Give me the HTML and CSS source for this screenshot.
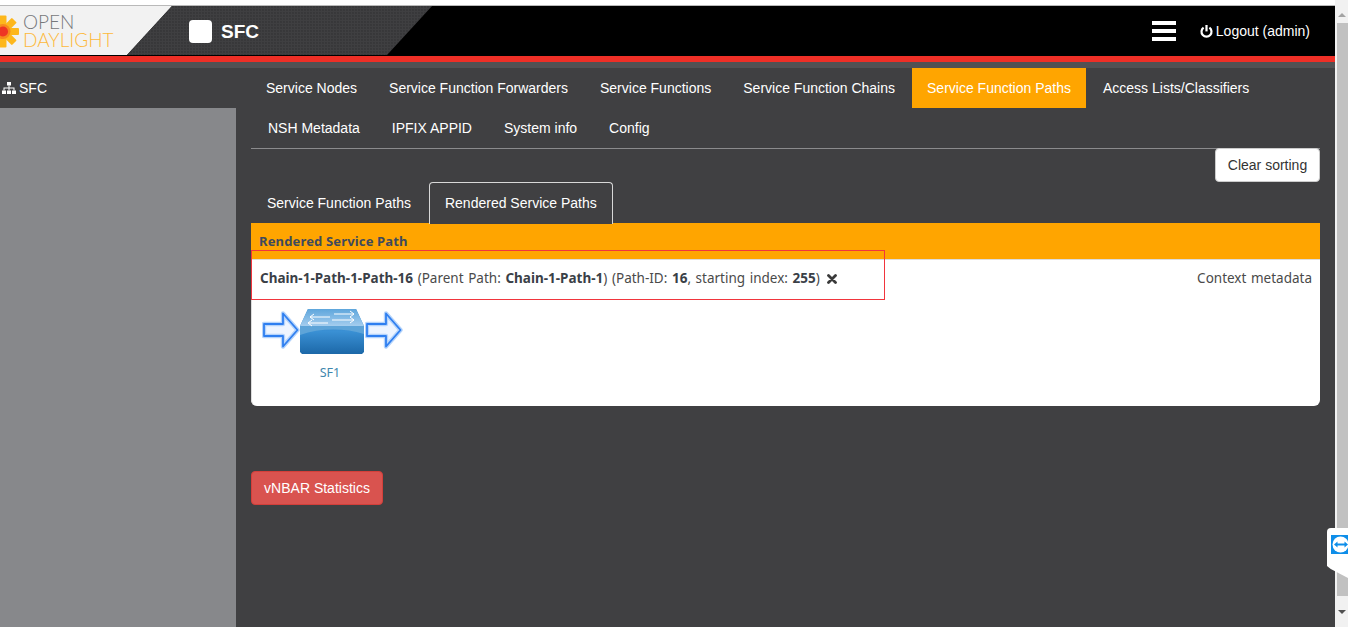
FILE: index.html
```html
<!DOCTYPE html>
<html lang="en">
<head>
<meta charset="utf-8">
<title>SFC</title>
<link rel="stylesheet" href="styles.css">
</head>
<body>
<div class="page">
  <div class="topstrip"></div>
  <header class="header">
    <div class="logo">
      <svg class="flower" width="20" height="34" viewBox="0 0 20 34">
        <g fill="#fdb71c">
          <rect x="-13" y="13" width="32" height="7" rx="1"/>
          <rect x="-13" y="13" width="32" height="7" rx="1" transform="rotate(45 3 16.500)"/>
          <rect x="-13" y="13" width="32" height="7" rx="1" transform="rotate(90 3 16.500)"/>
          <rect x="-13" y="13" width="32" height="7" rx="1" transform="rotate(135 3 16.500)"/>
        </g>
        <circle cx="3" cy="16.500" r="7.500" fill="#f78a1e"/>
        <circle cx="3" cy="16.500" r="5" fill="#ee3524"/>
      </svg>
      <div class="logotext"><span class="open">OPEN</span><span class="day">DAYLIGHT</span></div>
    </div>
    <div class="brand">
      <span class="brandbox"></span>
      <span class="brandname">SFC</span>
    </div>
    <div class="headright">
      <div class="burger"><i></i><i></i><i></i></div>
      <div class="logout">
        <svg width="13" height="13" viewBox="0 0 13 13"><path d="M3.600 2.600a5 5 0 1 0 5.800 0" fill="none" stroke="#fff" stroke-width="2.200"/><rect x="5.400" y="0" width="2.200" height="6.400" fill="#fff"/></svg>
        <span>Logout (admin)</span>
      </div>
    </div>
  </header>
  <div class="redbar"></div>
  <div class="graybar"></div>
  <div class="main">
    <aside class="side">
      <div class="sidehead">
        <svg width="14" height="12" viewBox="0 0 14 12" fill="#fff"><rect x="5" y="0" width="4" height="3.500"/><rect x="0" y="8.500" width="4" height="3.500"/><rect x="5" y="8.500" width="4" height="3.500"/><rect x="10" y="8.500" width="4" height="3.500"/><path d="M6.500 3.500h1V5.500H12.500V8.500h-1V6.500H7.500V8.500h-1V6.500H2.500V8.500h-1V5.500H6.500z"/></svg>
        <span>SFC</span>
      </div>
      <div class="sidefill"></div>
    </aside>
    <section class="content">
      <nav class="pills">
        <a class="pill">Service Nodes</a>
        <a class="pill">Service Function Forwarders</a>
        <a class="pill">Service Functions</a>
        <a class="pill">Service Function Chains</a>
        <a class="pill active">Service Function Paths</a>
        <a class="pill">Access Lists/Classifiers</a>
        <a class="pill">NSH Metadata</a>
        <a class="pill">IPFIX APPID</a>
        <a class="pill">System info</a>
        <a class="pill">Config</a>
      </nav>
      <div class="toolrow"><button class="btn">Clear sorting</button></div>
      <div class="tabs">
        <a class="tab">Service Function Paths</a>
        <a class="tab current">Rendered Service Paths</a>
      </div>
      <div class="panel">
        <div class="panelhead">Rendered Service Path</div>
        <div class="panelbody">
          <div class="pathrow">
            <div><b>Chain-1-Path-1-Path-16</b> (Parent Path: <b>Chain-1-Path-1</b>) (Path-ID: <b>16</b>, starting index: <b>255</b>) <svg class="times" width="10" height="10" viewBox="0 0 10 10"><path d="M1.500 1.500l7 7M8.500 1.500l-7 7" stroke="#3a3a3a" stroke-width="2.800" stroke-linecap="round"/></svg></div>
            <div>Context metadata</div>
          </div>
          <div class="diagram">
            <div class="flow">
              <svg class="arrow" width="38" height="38" viewBox="0 0 38 38"><path d="M2 13H21V2.500L35.500 19 21 35.500V25H2z" fill="#eef5ff" stroke="#b5d4fb" stroke-width="4.400" stroke-linejoin="round"/><path d="M2 13H21V2.500L35.500 19 21 35.500V25H2z" fill="none" stroke="#2f7ff0" stroke-width="1.800" stroke-linejoin="round"/></svg>
              <svg width="64" height="45" viewBox="0 0 64 45">
                <defs>
                  <linearGradient id="front" x1="0" y1="0" x2="0" y2="1"><stop offset="0" stop-color="#2a7dc2"/><stop offset="0.5" stop-color="#3a90d4"/><stop offset="1" stop-color="#1c68a8"/></linearGradient>
                  <linearGradient id="roof" x1="0" y1="0" x2="0" y2="1"><stop offset="0" stop-color="#5ea6dc"/><stop offset="1" stop-color="#a5cdee"/></linearGradient>
                </defs>
                <path d="M8 0H56L64 17V43L62 45H2L0 43V17z" fill="url(#front)"/>
                <path d="M8 0H56L64 17H0z" fill="url(#roof)"/>
                <path d="M0 17H64V25C44 19 20 19 0 26z" fill="#5ea4d8"/>
                <path d="M10 8H30M10 8l4-3M10 8l4 3M34 5H54M54 5l-4-3M54 5l-4 3M8 14H28M8 14l4-3M8 14l4 3M32 11H54M54 11l-4-3M54 11l-4 3" stroke="#fff" stroke-width="1" fill="none"/>
              </svg>
              <svg class="arrow" width="38" height="38" viewBox="0 0 38 38"><path d="M2 13H21V2.500L35.500 19 21 35.500V25H2z" fill="#eef5ff" stroke="#b5d4fb" stroke-width="4.400" stroke-linejoin="round"/><path d="M2 13H21V2.500L35.500 19 21 35.500V25H2z" fill="none" stroke="#2f7ff0" stroke-width="1.800" stroke-linejoin="round"/></svg>
            </div>
            <div class="sflabel">SF1</div>
          </div>
        </div>
      </div>
      <button class="danger">vNBAR Statistics</button>
    </section>
  </div>
  <div class="annotation"></div>
</div>
<div class="scrollbar">
  <div class="arrowbox"><span class="up"></span></div>
  <div class="thumb"></div>
  <div class="arrowbox bottom"><span class="down"></span></div>
</div>
<div class="tvtab"><div class="tvicon"><svg width="17" height="19" viewBox="0 0 17 19"><circle cx="9.500" cy="9.500" r="8" fill="#fff"/><path d="M3 9.500l3.500-3v2h7v-2l3.500 3-3.500 3v-2h-7v2z" fill="#0e8ee9"/></svg></div></div>
</body>
</html>
```
FILE: styles.css
```css
* { box-sizing: border-box; }
html, body { margin: 0; height: 100%; overflow: hidden; }
body { display: flex; height: 627px; background: #fff; font-family: "Liberation Sans", Arial, sans-serif; font-size: 14px; color: #fff; }
.page { position: relative; width: 1335px; height: 627px; display: flex; flex-direction: column; background: #404042; }
.topstrip { height: 6px; background: #fff; border-bottom: 1px solid #b9b9b9; flex: none; }
.header { height: 50px; flex: none; background: #000; display: flex; align-items: stretch; border-bottom: 1px solid #000; }
.logo { width: 172px; background: #f2f2f2; clip-path: polygon(0 0, 100% 0, 127px 100%, 0 100%); display: flex; align-items: center; gap: 3px; padding-top: 1px; }
.flower { flex: none; margin-top: 1px; }
.logotext { display: flex; flex-direction: column; font-family: Lato, "Liberation Sans", sans-serif; font-weight: 300; font-size: 19px; line-height: 18px; }
.open { color: #77787b; height: 18px; }
.day { color: #fdb93b; height: 18px; }
.brand { width: 305px; margin-left: -45px; clip-path: polygon(45px 0, 100% 0, 260px 100%, 0 100%); background-color: #3f3f41; background-image: radial-gradient(circle at 1px 1px, #2f2f31 0.6px, transparent 0.8px); background-size: 3px 3px; display: flex; align-items: center; padding-left: 62px; padding-top: 2px; }
.brandbox { width: 23px; height: 23px; background: #fff; border-radius: 4px; }
.brandname { margin-left: 9px; font-size: 19px; font-weight: 700; }
.headright { margin-left: auto; display: flex; align-items: center; padding-right: 25px; padding-top: 1px; }
.burger { display: flex; flex-direction: column; gap: 4px; width: 24px; margin-right: 24px; }
.burger i { display: block; height: 4px; background: #fff; }
.logout { display: flex; align-items: center; gap: 3px; }
.redbar { height: 6px; background: #ee2f26; flex: none; }
.graybar { height: 6px; background: #515153; flex: none; }
.main { flex: 1; display: flex; min-height: 0; }
.side { width: 236px; flex: none; display: flex; flex-direction: column; }
.sidehead { height: 40px; display: flex; align-items: center; gap: 3px; padding-left: 2px; }
.sidefill { flex: 1; background: #87888b; }
.content { flex: 1; padding: 0 15px; min-width: 0; }
.pills { display: flex; flex-wrap: wrap; column-gap: 2px; height: 81px; align-content: flex-start; border-bottom: 1px solid #8b8b8d; }
.pill { height: 40px; line-height: 40px; padding: 0 15px; color: #fff; }
.pill:nth-child(7) { margin-left: 2px; }
.pill.active { background: #ffa500; }
.toolrow { display: flex; justify-content: flex-end; height: 34px; margin-top: -1px; }
.btn { width: 105px; height: 34px; font: inherit; color: #333; background: #fff; border: 1px solid #ccc; border-radius: 4px; padding: 0; position: relative; }
.tabs { display: flex; height: 41px; column-gap: 2px; }
.tab { height: 41px; line-height: 40px; padding: 0 15px; border: 1px solid transparent; border-bottom: 0; border-radius: 4px 4px 0 0; color: #fff; }
.tab.current { border-color: #d8d8d8; height: 42px; position: relative; background: #404042; }
.panel { border-radius: 0 0 6px 6px; background: #fff; height: 183px; }
.panelhead { height: 36px; background: #ffa500; color: #3e4a5d; font-family: "Noto Sans", sans-serif; font-weight: 700; font-size: 13px; letter-spacing: 0.15px; line-height: 36px; padding-left: 8px; }
.panelbody { height: 147px; padding: 0 8px 0 8px; font-family: "Noto Sans", sans-serif; font-size: 13.5px; word-spacing: 1.1px; color: #4a4a4a; border-left: 1px solid #dcdcdc; border-top: 1px solid #dcdcdc; border-radius: 0 0 6px 6px; }
.panelbody b { color: #3a3f47; }
.pathrow { display: flex; justify-content: space-between; height: 36px; align-items: center; }
.times { vertical-align: -1px; margin-left: 3px; }
.diagram { padding-left: 2px; padding-top: 13px; }
.flow { display: flex; align-items: flex-start; }
.arrow { margin-top: 2px; }
.arrow:last-child { margin-left: 1px; }
.sflabel { width: 140px; text-align: center; margin: 11px 0 0 -2px; font-size: 12.5px; word-spacing: 0; color: #3f87ad; line-height: 16px; }
.danger { display: block; margin-top: 65px; width: 132px; height: 34px; font: inherit; color: #fff; background: #d9534f; border: 1px solid #d43f3a; border-radius: 4px; padding: 0; }
.annotation { position: absolute; left: 251px; top: 250px; width: 634px; height: 50px; border: 1px solid #f1353d; pointer-events: none; }
.scrollbar { width: 13px; flex: none; display: flex; flex-direction: column; background: #f1f1f1; padding-top: 6px; }
.arrowbox { height: 17px; display: flex; align-items: center; justify-content: center; flex: none; }
.arrowbox.bottom { height: 31px; margin-top: auto; }
.up { border: 4px solid transparent; border-bottom: 4px solid #a3a3a3; border-top: 0; }
.down { border: 4px solid transparent; border-top: 4px solid #505050; border-bottom: 0; }
.thumb { height: 573px; margin-left: 2px; background: #c1c1c1; flex: none; }
.tvtab { position: absolute; left: 1327px; top: 528px; width: 21px; height: 50px; background: #fff; border-radius: 4px 0 0 0; clip-path: polygon(0 0, 100% 0, 100% 100%, 18% 82%, 0 76%); padding: 7px 0 0 4px; }
.tvicon { width: 17px; height: 19px; background: #0e8ee9; }
.tvicon svg { display: block; }
```
